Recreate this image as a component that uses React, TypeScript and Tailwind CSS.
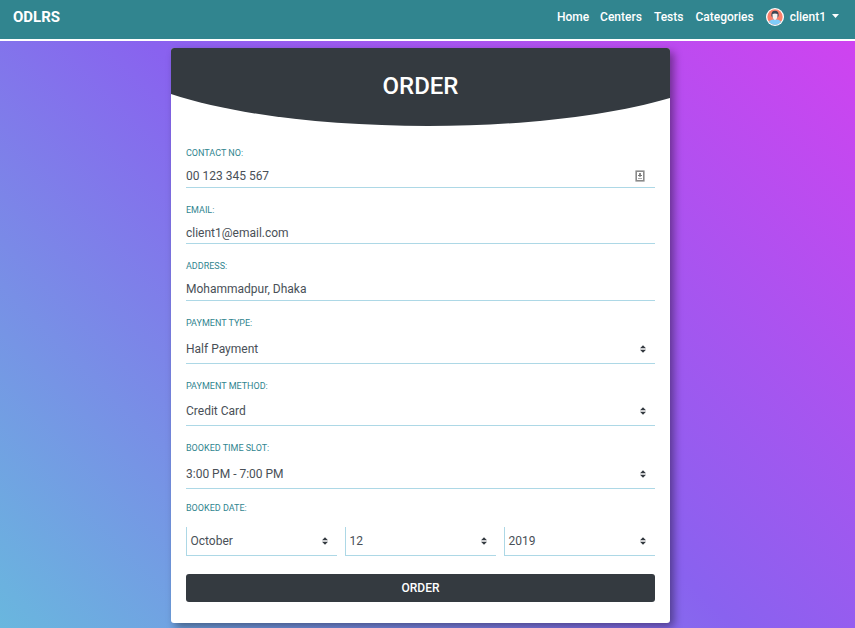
import React from "react";

const roboto = "font-[Roboto,'Liberation_Sans',sans-serif]";

function Avatar() {
  return (
    <svg className="h-[18px] w-[18px]" viewBox="0 0 18 18">
      <circle cx="9" cy="9" r="9" fill="#fff" />
      <circle cx="9" cy="9" r="7.7" fill="#fb806b" />
      <path d="M3 14.1C3.8 12.2 6 11.6 9 11.6s5.2.6 6 2.500A7.700 7.700 0 0 1 3 14.100Z" fill="#80cdfa" />
      <path d="M5.400 8C5 4.500 6.300 2.700 9 2.700s4 1.800 3.600 5.300L11.500 9.500h-5Z" fill="#3c4654" />
      <path d="M6.500 6Q9 4.800 11.500 6V8.500Q11.300 10.300 10.300 11L9 12.300L7.700 11Q6.700 10.300 6.500 8.500Z" fill="#f7f3f1" />
    </svg>
  );
}

function Arrows() {
  return (
    <svg className="mr-[9px] h-[8px] w-[6px]" viewBox="0 0 6 8">
      <path fill="#343a40" d="M3 0.300L6 3.200H0zM3 7.700L0 4.800H6z" />
    </svg>
  );
}

function ContactIcon() {
  return (
    <svg className="mr-[10px] h-[12px] w-[10px]" viewBox="0 0 10 12">
      <rect x="1.200" y="1.200" width="7.600" height="9.600" fill="#fff" stroke="#8a8a8a" strokeWidth="1.600" />
      <rect x="4" y="3" width="2" height="2" fill="#888" />
      <rect x="3" y="5" width="4" height="1" fill="#777" />
      <rect x="4" y="6" width="2" height="1" fill="#aaa" />
      <rect x="3" y="8" width="4" height="1" fill="#aaa" />
    </svg>
  );
}

type FieldProps = {
  label: string;
  value: string;
  height: string;
  row: string;
  icon?: React.ReactNode;
};

function Field({ label, value, height, row, icon }: FieldProps) {
  return (
    <div className={`flex flex-col justify-between border-b border-[#add8e6] ${height}`}>
      <div className="text-[9px] leading-[12px] text-[#31858f]">{label}</div>
      <div className={`flex items-center justify-between text-[12px] text-[#495057] ${row}`}>
        <span>{value}</span>
        {icon}
      </div>
    </div>
  );
}

function DateSelect({ value }: { value: string }) {
  return (
    <div className="flex h-[29px] flex-1 items-center justify-between border-b border-l border-[#add8e6] pl-[3.500px] text-[12px] text-[#495057]">
      <span>{value}</span>
      <Arrows />
    </div>
  );
}

export default function App() {
  return (
    <div className={`flex h-[628px] w-[855px] flex-col overflow-hidden ${roboto}`}>
      <nav className="flex h-[41px] shrink-0 items-start justify-between border-b-2 border-white bg-[#31858f] text-white">
        <div className="pl-[13px] pt-[7px] text-[15px] font-bold leading-[20px]">ODLRS</div>
        <div className="flex h-[34px] items-center gap-[12px] pr-[16px] text-[12px] font-medium">
          <span className="-mr-px">Home</span>
          <span>Centers</span>
          <span>Tests</span>
          <span>Categories</span>
          <span className="flex items-center">
            <Avatar />
            <span className="ml-[6px]">client1</span>
            <svg className="mb-[2px] ml-[6px] h-[4px] w-[7px]" viewBox="0 0 7 4">
              <path d="M0 0H7L3.500 4Z" fill="#fff" />
            </svg>
          </span>
        </div>
      </nav>
      <main className="flex-1 bg-[linear-gradient(45deg,#69b7de_0%,#8962ef_51%,#cf43f0_100%)] pl-[171px] pt-[7px]">
        <section className="h-[575px] w-[499px] overflow-hidden rounded-[3px] bg-white shadow-[4px_4px_8px_rgba(0,0,0,0.4)]">
          <header className="relative h-[78px] overflow-hidden">
            <svg className="absolute inset-0 h-full w-full" viewBox="0 0 499 78">
              <path d="M0 0H499V50C438 68 350 78 257 78C157 78 64 67 0 46Z" fill="#343a40" />
            </svg>
            <h1 className="relative pt-[20px] text-center text-[24px] font-medium leading-[36px] text-white">ORDER</h1>
          </header>
          <form className="px-[15px] pt-[21px]">
            <div className="flex flex-col">
              <Field label="CONTACT NO:" value="00 123 345 567" height="h-[41px]" row="h-[23px]" icon={<ContactIcon />} />
              <div className="h-[16px]" />
              <Field label="EMAIL:" value="client1@email.com" height="h-[40px]" row="h-[20px]" />
              <div className="h-[16px]" />
              <Field label="ADDRESS:" value="Mohammadpur, Dhaka" height="h-[41px]" row="h-[23px]" />
              <div className="h-[16px]" />
              <Field label="PAYMENT TYPE:" value="Half Payment" height="h-[47px]" row="h-[29px]" icon={<Arrows />} />
              <div className="h-[16px]" />
              <Field label="PAYMENT METHOD:" value="Credit Card" height="h-[46px]" row="h-[29px]" icon={<Arrows />} />
              <div className="h-[16px]" />
              <Field label="BOOKED TIME SLOT:" value="3:00 PM - 7:00 PM" height="h-[47px]" row="h-[29px]" icon={<Arrows />} />
            </div>
            <div className="mt-[13px] text-[9px] leading-[12px] text-[#31858f]">BOOKED DATE:</div>
            <div className="mt-[13px] flex gap-[8px]">
              <DateSelect value="October" />
              <DateSelect value="12" />
              <DateSelect value="2019" />
            </div>
            <button type="button" className="mt-[18px] h-[28px] w-full rounded-[3px] bg-[#343a40] text-[12px] font-medium text-white">
              ORDER
            </button>
          </form>
        </section>
      </main>
    </div>
  );
}
